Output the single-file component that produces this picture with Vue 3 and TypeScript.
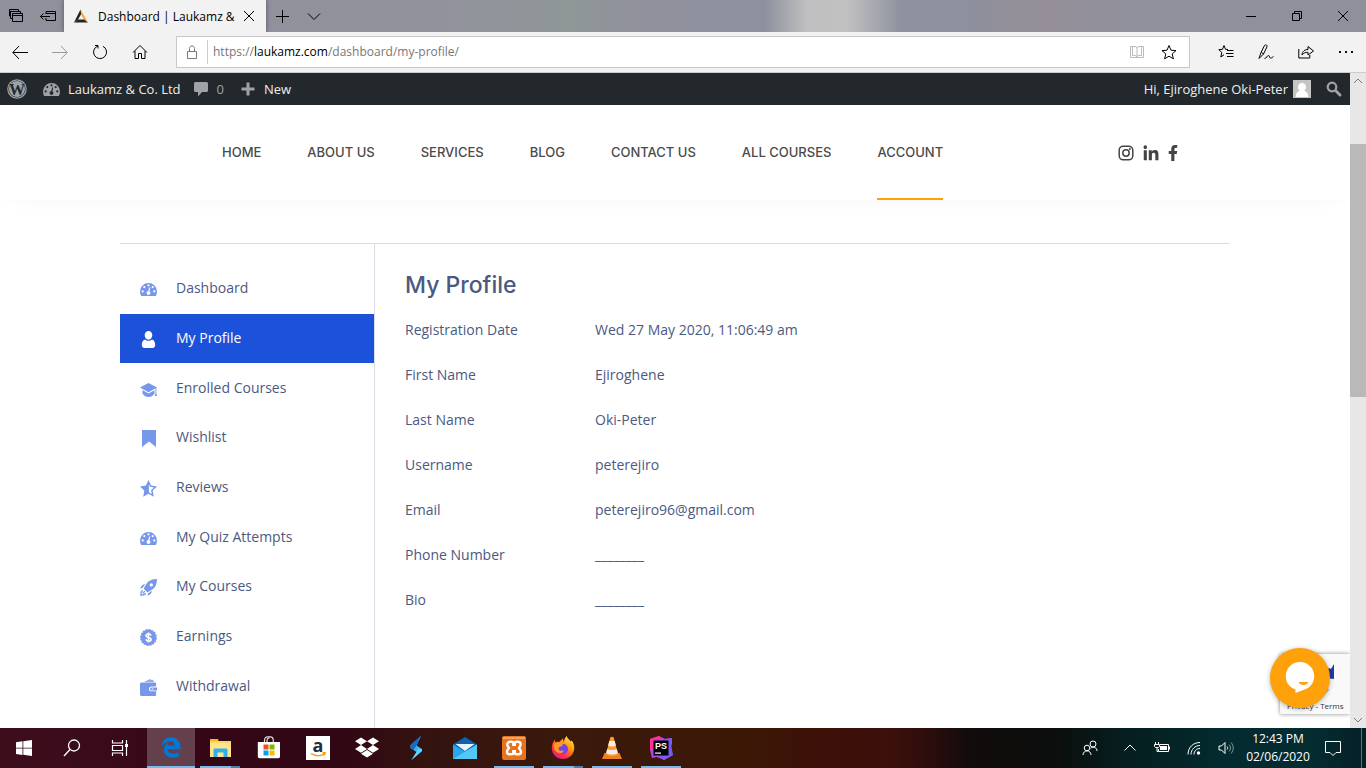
<script setup lang="ts">
interface MenuItem {
  label: string
  icon: string
  active?: boolean
}

interface TaskItem {
  label: string
  icon: string
  state?: 'focused' | 'open' | 'stacked'
}

const gauge =
  '<path fill-rule="evenodd" d="M8.500 2A8.500 8.500 0 0 0 0 10.500c0 1.700.4 3.200 1.200 4.500h14.600c.8-1.300 1.200-2.800 1.200-4.500A8.500 8.500 0 0 0 8.500 2zM8.500 3.200a1.100 1.100 0 1 1 0 2.200 1.100 1.100 0 0 1 0-2.200zM4.300 5a1.100 1.100 0 1 1 0 2.200 1.100 1.100 0 0 1 0-2.200zM2.700 9.300a1.100 1.100 0 1 1 0 2.200 1.100 1.100 0 0 1 0-2.200zM14.300 9.300a1.100 1.100 0 1 1 0 2.200 1.100 1.100 0 0 1 0-2.200zM12.700 5a1.100 1.100 0 1 1 0 2.200 1.100 1.100 0 0 1 0-2.200zM9.300 6.300l.9.3-.7 4a1.800 1.800 0 1 1-1.300-.3z"/>'

const menu: MenuItem[] = [
  { label: 'Dashboard', icon: gauge },
  {
    label: 'My Profile',
    active: true,
    icon: '<path d="M8.500 0c2.300 0 3.800 1.700 3.800 4S10.800 8.700 8.500 8.700 4.700 6.300 4.700 4 6.200 0 8.500 0zM5 8.500c1 .9 2.200 1.300 3.500 1.300S11 9.400 12 8.500c2.200.8 3.200 2.600 3.200 5.200 0 2-1 3.300-2.800 3.300H4.600c-1.800 0-2.800-1.300-2.800-3.300 0-2.600 1-4.400 3.200-5.200z"/>',
  },
  {
    label: 'Enrolled Courses',
    icon: '<path d="M8.500 2L0 6.500l2.200 1.300L8.500 11.200l6.300-3.400.7-.4v4.800l-.7 2.800H17l-.7-2.800V7L17 6.500zM2.500 9v3.500C4 15 6 16 8.500 16s4.500-1 6-3.500V9.200l-6 3.300z"/>',
  },
  { label: 'Wishlist', icon: '<path d="M2 0h14v17l-7-5.500L2 17z"/>' },
  {
    label: 'Reviews',
    icon: '<path fill-rule="evenodd" d="M8.500 0l2.600 5.600 5.900.8-4.300 4.200 1.100 6.100-5.300-3-5.300 3 1.100-6.100L0 6.400l5.900-.8zM8.900 4v8.300l2.900 1.700-.7-3.900 2.900-2.700-4-.6z"/>',
  },
  { label: 'My Quiz Attempts', icon: gauge },
  {
    label: 'My Courses',
    icon: '<path fill-rule="evenodd" d="M17 0c-5 0-8.300 1.500-10.500 4.700L3.600 9.600l3.800 3.800 4.900-2.900C15.500 8.300 17 5 17 0zM11.300 4.200a1.700 1.700 0 1 1 0 3.400 1.700 1.700 0 0 1 0-3.400zM5.200 4.800L2 6.200.2 9.500l2.600-.7zM12.200 11.800l-1.400 3.200-3.300 1.800.7-2.600z"/><path fill="none" stroke="currentColor" stroke-width="1.300" d="M2.500 11.200C1 12.500.7 14 .8 16.200c2.200.1 3.700-.2 5-1.700M2.700 14.300l2.100-2.100"/>',
  },
  {
    label: 'Earnings',
    icon: '<circle cx="8.500" cy="8.500" r="7.700"/><circle cx="8.500" cy="8.500" r="7.700" fill="none" stroke="currentColor" stroke-width="1.500" stroke-dasharray="2 1"/><path fill="none" stroke="#fff" stroke-width="1.600" d="M8.500 3.500v10M11.100 6.500C10.700 5.300 9.700 5 8.500 5 7.100 5 6 5.600 6 6.700c0 2.500 5.100 1 5.100 3.700 0 1.100-1.100 1.700-2.500 1.700S6.200 11.500 5.800 10.300"/>',
  },
  {
    label: 'Withdrawal',
    icon: '<path fill-rule="evenodd" d="M1.500 3.500h13.700c.6 0 .9.400.9.900v3.100h-4.500c-1.700 0-2.600 1-2.600 2.400s.9 2.400 2.600 2.400h4.500v3.600c0 .6-.3 1.100-.9 1.100H1.500C.6 17 0 16.500 0 15.600V5c0-.9.600-1.500 1.500-1.500z"/><path d="M11.600 8.400H17v3.100h-5.400a1.500 1.500 0 0 1 0-3.100z"/><path stroke="#fff" d="M11.800 10h1.500"/><path d="M4 3l6-3 1.300 1L13 .8l1 2.200z" opacity=".8"/>',
  },
]

const profile: [string, string][] = [
  ['Registration Date', 'Wed 27 May 2020, 11:06:49 am'],
  ['First Name', 'Ejiroghene'],
  ['Last Name', 'Oki-Peter'],
  ['Username', 'peterejiro'],
  ['Email', 'peterejiro96@gmail.com'],
  ['Phone Number', '________'],
  ['Bio', '________'],
]

const siteLinks = ['Home', 'About us', 'Services', 'Blog', 'Contact us', 'All courses', 'Account']

const systemTasks: TaskItem[] = [
  { label: 'Start', icon: '<path fill="#fff" d="M4 6.300l6.500-1v6.400H4zM11.300 5.200L20 4v7.700h-8.700zM4 12.500h6.500v6.400L4 18zM11.300 12.500H20V20l-8.700-1.200z"/>' },
  { label: 'Search', icon: '<g fill="none" stroke="#fff" stroke-width="1.300"><circle cx="14" cy="9.500" r="5.500"/><path d="M10 13.500L4 20"/></g>' },
  { label: 'Task View', icon: '<path fill="none" stroke="#fff" stroke-width="1.200" d="M4.500 4v3h10V4M4.500 20v-3h10v3M4.500 9.500h10v5h-10zM18.500 4v16"/><path fill="#fff" d="M17 8h3v3h-3z"/>' },
]

const appTasks: TaskItem[] = [
  {
    label: 'Microsoft Edge',
    state: 'focused',
    icon: '<path fill="#0078d7" transform="translate(1.500 1) scale(.041)" d="M486.286 243.671c0-44.032-7.754-84.465-28.801-122.405C416.498 47.879 343.912 8.001 258.893 8.001 118.962 7.724 40.617 113.214 26.056 227.679c42.429-61.312 117.073-121.376 220.375-124.966 0 0 109.666 0 99.419 104.957H169.997c6.369-37.386 18.554-58.986 34.339-78.926-75.048 34.900-121.850 96.096-120.742 188.315.83 71.448 50.124 144.836 120.743 171.976 83.357 31.847 192.776 7.200 240.132-21.324V363.307c-80.864 56.494-270.871 60.925-272.255-67.572h314.073v-52.063z"/>',
  },
  {
    label: 'File Explorer',
    state: 'stacked',
    icon: '<path fill="#f2b91d" d="M2 3h8l1 3H2z"/><path fill="#ffe391" d="M2 5h21v16H2z"/><path fill="#fdd663" d="M2 5h21v2H2z"/><path fill="#2fb1e8" d="M5.500 21v-7c0-.8.7-1.500 1.500-1.500h11c.8 0 1.500.7 1.500 1.500v7h-4v-4.500h-6V21z"/>',
  },
  {
    label: 'Microsoft Store',
    icon: '<path fill="none" stroke="#ddd" stroke-width="1.200" d="M7.500 7V4.500C7.500 2 9 .8 10.500.8h2.800c1.500 0 3 1.200 3 3.700V7M10 7V5c0-2 1-3 2.500-3"/><path fill="#fff" d="M.8 6H23v14.500c0 1-.7 1.700-1.700 1.700H2.500c-1 0-1.700-.7-1.700-1.700z"/><path fill="#f04e1f" d="M6.500 8.500h5v5h-5z"/><path fill="#7db900" d="M12.500 8.500h5v5h-5z"/><path fill="#00a3ee" d="M6.500 14.500h5v5h-5z"/><path fill="#ffb800" d="M12.500 14.500h5v5h-5z"/>',
  },
  {
    label: 'Amazon',
    icon: '<path fill="#fff" d="M0 0h24v24H0z"/><text x="12" y="15.500" text-anchor="middle" font-family="Open Sans, sans-serif" font-size="18" font-weight="700" fill="#232f3e">a</text><path fill="none" stroke="#f90" stroke-width="1.500" d="M5 17.500c4 3 9.500 3 13.500.3M16.500 16.800h2.500l-.7 2.400"/>',
  },
  {
    label: 'Dropbox',
    icon: '<path fill="#fff" d="M6 1.500l6 3.800L6 9.100 0 5.300zM18 1.500l6 3.800-6 3.800-6-3.800zM6 9.100l6 3.800-6 3.800-6-3.800zM18 9.100l6 3.800-6 3.800-6-3.800zM12 14l6 3.800-6 3.800-6-3.800z"/>',
  },
  {
    label: 'Stream',
    icon: '<path fill="#35b8f5" d="M17 0l-4.500 9.500L18 13v2L7.500 24l5-8-6-4V9z"/><path fill="#1769c4" d="M17 0L6.500 9v3l3 2L12.500 9.500z"/><path fill="#5ad6fb" d="M18 13v2L7.500 24l5-8 1.500-3z"/>',
  },
  {
    label: 'Mail',
    icon: '<path fill="#0a63b5" d="M0 8.500L12 1l12 7.500V22H0z"/><path fill="#e9f3fa" d="M2.500 8h19L12 15z"/><path fill="#2aa6ea" d="M0 8.500l12 7 12-7V23H0z"/><path fill="#53c8f8" d="M24 8.500L0 23h24z"/>',
  },
  {
    label: 'XAMPP',
    state: 'open',
    icon: '<rect width="24" height="24" rx="2" fill="#e8731d"/><path fill="#f4a468" d="M1 1h22v2H1z"/><path fill="none" stroke="#fff" stroke-width="2.400" d="M8 5.800h1.700c1.100 0 1.600.7 1.600 1.600v1.400h1.500V7.400c0-1 .6-1.600 1.600-1.600H16c1.500 0 2.600 1 2.600 2.500 0 1.700-.8 2.300-1.600 3.700.8 1.200 2 2.200 2 3.700s-1 2.600-2.500 2.600h-1.900c-1.200 0-1.800-.7-1.800-1.800v-1.300h-1.500v1.300c0 1.200-.7 1.800-1.800 1.800H7.600C6 18.300 5 17.200 5 15.700c0-1.600 1-2.500 2-3.700-.9-1.200-1.700-2.100-1.700-3.600C5.300 6.900 6.400 5.800 8 5.800z"/>',
  },
  {
    label: 'Firefox',
    state: 'stacked',
    icon: '<defs><linearGradient id="fox" x1=".9" y1="0" x2=".2" y2="1"><stop offset="0" stop-color="#fff44f"/><stop offset=".4" stop-color="#ff980e"/><stop offset=".7" stop-color="#ff3647"/><stop offset="1" stop-color="#e31587"/></linearGradient></defs><path fill="url(#fox)" d="M15.500 0c1 2.500 3 3.500 4.300 5.500l1-1c1.900 2.800 2.700 5.400 2.400 8.600C22.600 19 18 23 12 23 5.500 23 .8 18.300.8 12c0-3.500 1.200-6.300 3-8.300l.7 2.800C6 5.500 7 5.500 8.200 5.900L12 2.500l.6 3.700c.7-2 1.200-4.200 2.900-6.200z"/><circle cx="12" cy="13" r="5" fill="#7542e5"/><path fill="#ff9a1f" d="M3 8c3-2 6-2 9 1-1 2-4 1-4.500 3.500S11 15 13 14.500c-1 3-5 4-8 1S3 10 3 8z"/>',
  },
  {
    label: 'VLC',
    state: 'open',
    icon: '<path fill="#f08019" d="M4.500 17h15l2.500 6H2z"/><path fill="#ff9a2b" d="M10.300 1.500c.5-1 2.900-1 3.400 0L18 18c-2 3-10 3-12 0z"/><path fill="#eee" d="M9.300 5h5.400l1.200 4.500c-2 1.200-5.800 1.200-7.800 0zM7.200 13c2.500 1.300 7.100 1.300 9.600 0l1.100 4c-2.700 2-9.100 2-11.800 0z"/>',
  },
  {
    label: 'PhpStorm',
    state: 'open',
    icon: '<path fill="#b345f1" d="M1 3l9-3 6 3 7-1v6l-2 4 3 7-9 5-7-3-5 1L1 14z"/><path fill="#765af8" d="M15 3l8-1-1 6 2 11-9 5-5-4z"/><path fill="#ff318c" d="M1 3l9-3 3 4H5v10l-4 0z"/><path fill="#000" d="M4.500 4.500h15v15h-15z"/><text x="12" y="12.500" text-anchor="middle" font-family="Liberation Sans, sans-serif" font-size="9" font-weight="700" fill="#fff">PS</text><path fill="#fff" d="M6 16.500h6v1.200H6z"/>',
  },
]
</script>

<template>
  <div class="desktop">
    <header class="titlebar">
      <button class="set-aside" aria-label="Tabs you've set aside">
        <svg class="i16" viewBox="0 0 16 16"><path class="line" d="M4.500 5.500h10v8h-10zM4.500 7.500h10M4 10.500H2.500V3M2.500 5.500V3.500h10v2M2 8H1.500V1.500h9v2" /></svg>
      </button>
      <button class="set-aside" aria-label="Set these tabs aside">
        <svg class="i16" viewBox="0 0 16 16"><path class="line" d="M6 6V3.500h9.500v9H6V10M6 5.500h9.500M10 8.500H.5M3.500 5.500l-3 3 3 3" /></svg>
      </button>
      <div class="tab">
        <svg class="i16" viewBox="0 0 16 16"><path fill="#222" d="M7.500 1.500l1 4-3.500 6L1 14.500z" /><path fill="#f5a52a" d="M7.500 1.500l7.500 13-4-3-3-5.500z" /><path fill="#2c241c" d="M1 14.500l4-3h6l4 3z" /></svg>
        <span class="tab-title">Dashboard | Laukamz &amp;</span>
        <button class="tab-close" aria-label="Close tab">
          <svg class="i16" viewBox="0 0 16 16"><path class="line" d="M3 3l10 10M13 3L3 13" /></svg>
        </button>
      </div>
      <button class="tab-tool" aria-label="New tab">
        <svg class="i16" viewBox="0 0 16 16"><path class="line" d="M8.500 2v13M2 8.500h13" /></svg>
      </button>
      <button class="tab-tool" aria-label="Show tab previews">
        <svg class="i16" viewBox="0 0 16 16"><path class="line" d="M2 5.500l6 6 6-6" /></svg>
      </button>
      <div class="window-buttons">
        <button aria-label="Minimize"><svg class="i16" viewBox="0 0 16 16"><path class="line" d="M3 8.500h10" /></svg></button>
        <button aria-label="Restore"><svg class="i16" viewBox="0 0 16 16"><path class="line" d="M3.500 5.500h7v7h-7zM5.500 5.500v-2h7v7h-2" /></svg></button>
        <button aria-label="Close"><svg class="i16" viewBox="0 0 16 16"><path class="line" d="M3 3l10 10M13 3L3 13" /></svg></button>
      </div>
    </header>

    <div class="toolbar">
      <button class="tool" aria-label="Back"><svg class="i16" viewBox="0 0 16 16"><path class="line" d="M16 8.500H1M7 2L.8 8.500 7 15" /></svg></button>
      <button class="tool faded" aria-label="Forward"><svg class="i16" viewBox="0 0 16 16"><path class="line" d="M0 8.500h15M9 2l6.200 6.500L9 15" /></svg></button>
      <button class="tool" aria-label="Refresh"><svg class="i16" viewBox="0 0 16 16"><path class="line" d="M3 1.500h3v3M5.800 2A6.500 6.500 0 1 0 11 2.300" /></svg></button>
      <button class="tool" aria-label="Home"><svg class="i16" viewBox="0 0 16 16"><path class="line" d="M1 8.500l7-7 7 7M3 7v7.500h3.500v-5h3v5H13V7" /></svg></button>
      <div class="address">
        <svg class="i16 lock" viewBox="0 0 16 16"><path class="line" d="M3.500 7.500h9v7h-9zM5.500 7V4.500c0-3.500 5-3.500 5 0V7" /></svg>
        <span class="divider"></span>
        <a class="url" href="https://laukamz.com/dashboard/my-profile/">https://<b>laukamz.com</b>/dashboard/my-profile/</a>
        <button class="in-field faint" aria-label="Reading view"><svg class="i16" viewBox="0 0 16 16"><path class="line" d="M1.500 2.500h4.500l2 1 2-1h4.500v11H1.500zM8 3.500v10M3.500 2v9.500h3l1.500 1 1.500-1h3V2" /></svg></button>
        <button class="in-field" aria-label="Add to favorites"><svg class="i16" viewBox="0 0 16 16"><path class="line" d="M8 1.500l2 4.700 5 .4-3.800 3.300 1.200 4.900L8 12.200l-4.400 2.600 1.200-4.900L1 6.600l5-.4z" /></svg></button>
      </div>
      <button class="tool" aria-label="Hub"><svg class="i16" viewBox="0 0 16 16"><path class="line" d="M10 5.500L7.500 5.300 6 1.500 4.500 5.300.8 5.700l3 2.800-1 4.500L6 10.800M9 6.500h6.500M8 9.500h7.500M9 12.500h6.500" /></svg></button>
      <button class="tool" aria-label="Add notes"><svg class="i16" viewBox="0 0 16 16"><path class="line" d="M1 14.500L3 8.500 6.500 1.500c1-1.300 3-.5 2.500 1.300L5.500 10 1 14.500zM3.500 8.500L6 10M6.500 14.500c2 0 2.500-3 4-3s.5 2.500 2 2.500 1.500-.5 3-1.500" /></svg></button>
      <button class="tool" aria-label="Share"><svg class="i16" viewBox="0 0 16 16"><path class="line" d="M.8 5v9h11v-3M4 11c.3-4 3-5.500 6-5.500V2.500L15.500 7 10 11V8.300C7.500 8.300 5.500 9 4 11z" /></svg></button>
      <button class="tool" aria-label="Settings and more"><svg class="i16" viewBox="0 0 16 16"><path fill="#111" d="M1 7h2v2H1zM7 7h2v2H7zM13 7h2v2h-2z" /></svg></button>
    </div>

    <div class="viewport">
      <div class="page">
        <nav class="adminbar" aria-label="Toolbar">
          <a href="#" class="wp" aria-label="About WordPress">
            <svg class="i20" viewBox="0 0 20 20"><circle cx="10" cy="10" r="9.200" fill="none" stroke="#9ea3a8" stroke-width="1.200" /><circle cx="10" cy="10" r="8" fill="#9ea3a8" /><text x="10" y="15.500" text-anchor="middle" font-family="Liberation Serif, serif" font-size="16" font-weight="700" fill="#23282d">W</text></svg>
          </a>
          <a href="#" class="site-name">
            <svg class="i17 grey" viewBox="0 0 17 17" v-html="gauge"></svg>Laukamz &amp; Co. Ltd
          </a>
          <a href="#" class="comments">
            <svg class="i16 grey" viewBox="0 0 16 16"><path d="M2.500 1h11c.8 0 1.500.7 1.500 1.500v7c0 .8-.7 1.500-1.500 1.500H9l-4 4.500V11H2.500C1.700 11 1 10.300 1 9.500v-7C1 1.700 1.700 1 2.500 1z" /></svg>0
          </a>
          <a href="#" class="new">
            <svg class="i16 grey" viewBox="0 0 16 16"><path d="M6.500 1.500h3v5h5v3h-5v5h-3v-5h-5v-3h5z" /></svg>New
          </a>
          <a href="#" class="account">
            Hi, Ejiroghene Oki-Peter
            <svg class="i18" viewBox="0 0 18 18"><path fill="#c5c5c5" d="M0 0h18v18H0z" /><path fill="#fff" d="M9 3c2.500 0 4 1.800 4 4 0 1.700-.8 3-1.800 3.800 2.500.6 4 2.700 4 6.200H2.800c0-3.500 1.500-5.600 4-6.200C5.800 10 5 8.700 5 7c0-2.200 1.500-4 4-4z" /></svg>
          </a>
          <button class="admin-search" aria-label="Search">
            <svg class="i16" viewBox="0 0 16 16"><g fill="none" stroke="#9ea3a8"><circle cx="6" cy="6" r="4.300" stroke-width="2.200" /><path stroke-width="3" stroke-linecap="round" d="M10 10l4 4" /></g></svg>
          </button>
        </nav>

        <header class="site-header">
          <div class="site-inner">
            <nav class="site-nav" aria-label="Main">
              <a v-for="link in siteLinks" :key="link" href="#" :class="{ current: link === 'Account' }">{{ link }}</a>
            </nav>
            <div class="social">
              <a href="#" aria-label="Instagram"><svg class="i16" viewBox="0 0 16 16"><g fill="none" stroke="#444" stroke-width="1.500"><rect x="1.200" y="1.200" width="13.600" height="13.600" rx="4" /><circle cx="8" cy="8" r="3.200" /></g><circle cx="11.900" cy="4.100" r="1" fill="#444" /></svg></a>
              <a href="#" aria-label="LinkedIn"><svg class="i16" viewBox="-5 -10 460 480"><path fill="#444" d="M100.280 448H7.400V148.900h92.880zM53.790 108.100C24.090 108.100 0 83.500 0 53.800a53.790 53.790 0 0 1 107.580 0c0 29.700-24.100 54.300-53.790 54.300zM447.900 448h-92.680V302.400c0-34.700-.7-79.200-48.290-79.200-48.290 0-55.690 37.700-55.690 76.700V448h-92.780V148.900h89.080v40.800h1.300c12.400-23.500 42.690-48.300 87.880-48.300 94 0 111.280 61.900 111.280 142.300V448z" /></svg></a>
              <a href="#" aria-label="Facebook"><svg class="fb" viewBox="0 0 320 512"><path fill="#444" d="M279.140 288l14.220-92.660h-88.910v-60.130c0-25.350 12.420-50.060 52.240-50.060h40.420V6.260S260.430 0 225.360 0c-73.220 0-121.080 44.380-121.080 124.720v70.620H22.890V288h81.390v224h100.170V288z" /></svg></a>
            </div>
          </div>
        </header>

        <main class="dashboard">
          <nav class="side" aria-label="Dashboard">
            <a v-for="item in menu" :key="item.label" href="#" :class="{ active: item.active }">
              <svg class="i17" viewBox="0 0 17 17" v-html="item.icon"></svg>{{ item.label }}
            </a>
          </nav>
          <section class="profile">
            <h1>My Profile</h1>
            <table>
              <tbody>
                <tr v-for="[name, value] in profile" :key="name">
                  <th scope="row">{{ name }}</th>
                  <td>{{ value }}</td>
                </tr>
              </tbody>
            </table>
          </section>
        </main>

        <aside class="captcha">
          <svg viewBox="0 0 40 36" class="captcha-mark"><path fill="#1c3aa9" d="M40 0v15l-9-1V7l4-3 2 1z" /><path fill="#ababab" d="M26 26l6-5 3 5-6 6z" /></svg>
          <p><a href="#">Privacy</a> - <a href="#">Terms</a></p>
        </aside>
        <button class="chat" aria-label="Open chat">
          <svg viewBox="0 0 60 60"><path fill="#fff" d="M30 14c8.200 0 14.200 6.300 14.200 14.200 0 7-4.800 12-10.200 13.600L25.500 45v-3.600C19.500 39.500 15.800 34.500 15.800 28.200 15.800 20.300 21.800 14 30 14z" /><path fill="#ffa10a" d="M28.500 34h10c-1 2-2.700 3-5 3s-4-1-5-3z" /></svg>
        </button>
      </div>
      <div class="scrollbar" aria-hidden="true">
        <svg class="i16" viewBox="0 0 16 16"><path class="line" d="M4 10l4-4 4 4" /></svg>
        <span class="thumb"></span>
        <svg class="i16" viewBox="0 0 16 16"><path class="line" d="M4 6l4 4 4-4" /></svg>
      </div>
    </div>

    <footer class="taskbar">
      <div class="system">
        <button v-for="task in systemTasks" :key="task.label" :aria-label="task.label"><svg class="i24" viewBox="0 0 24 24" v-html="task.icon"></svg></button>
      </div>
      <div class="apps">
        <button v-for="task in appTasks" :key="task.label" :aria-label="task.label" :class="task.state"><svg class="i24" viewBox="0 0 24 24" v-html="task.icon"></svg></button>
      </div>
      <div class="tray">
        <button class="people" aria-label="People"><svg class="i16" viewBox="0 0 16 16"><g class="white"><circle cx="11" cy="4" r="3" /><circle cx="5" cy="8" r="2.800" /><path d="M1 15c0-5.500 8-5.500 8 0M8.500 8.300c3-2.300 6.500-.8 6.500 2.700" /></g></svg></button>
        <button aria-label="Show hidden icons"><svg class="i16" viewBox="0 0 16 16"><path class="white" d="M2.500 10.500L8 5l5.500 5.500" /></svg></button>
        <button aria-label="Battery"><svg class="i16" viewBox="0 0 16 16"><path class="white" d="M6 4.500h8.500v7H4.500V9M15.500 6.500v3M1.500 2v2M4.500 2v2M.5 4.500h5v2c0 1.500-5 1.500-5 0zM3 8v3.500h1.500" /><path fill="#fff" d="M6 6h7v4H6z" /></svg></button>
        <button aria-label="Network"><svg class="i16" viewBox="0 0 16 16"><path class="white" d="M2 14.500C2 7.500 7 2.500 14 2.500M5 14.500c0-5 4-9 9-9M8 14.500c0-3.500 2.500-6 6-6" /><circle cx="12.500" cy="13" r="1.700" fill="#fff" /></svg></button>
        <button aria-label="Volume"><svg class="i16" viewBox="0 0 16 16"><path class="white" d="M1 6h2.500L7 2.500v11L3.500 10H1zM9 6.500c1 1 1 2 0 3" /><path class="white" opacity=".5" d="M11 4.500c2 2.200 2 4.800 0 7M13 2.500c3 3.500 3 7.500 0 11" /></svg></button>
        <time class="clock" datetime="2020-06-02T12:43">12:43 PM<br />02/06/2020</time>
        <button class="notices" aria-label="Notifications"><svg class="i18" viewBox="0 0 18 18"><path class="white" d="M1.500 2.500h15v11H12l-3 3-3-3H1.500z" /></svg></button>
        <span class="peek"></span>
      </div>
    </footer>
  </div>
</template>

<style>
body {
  margin: 0;
  overflow: hidden;
}
</style>

<style scoped>
.desktop {
  height: 100vh;
  display: flex;
  flex-direction: column;
  font-family: 'Open Sans', sans-serif;
  background: #fff;
}

button {
  padding: 0;
  border: 0;
  background: none;
  display: flex;
  align-items: center;
  justify-content: center;
  font: inherit;
}

a {
  color: inherit;
  text-decoration: none;
}

svg {
  display: block;
  flex: none;
  overflow: visible;
}

.i16 {
  width: 16px;
  height: 16px;
}

.i17 {
  width: 17px;
  height: 17px;
}

.i18 {
  width: 18px;
  height: 18px;
}

.i20 {
  width: 20px;
  height: 20px;
}

.i24 {
  width: 24px;
  height: 24px;
}

.line {
  fill: none;
  stroke: currentColor;
}

.white {
  fill: none;
  stroke: #fff;
}

.titlebar {
  flex: none;
  height: 32px;
  display: flex;
  background: linear-gradient(90deg, #8f909b 0, #92929d 32%, #8f9797 42%, #91919d 47%, #8d909d 56%, #bfbfc1 59%, #c1c1c1 62%, #8e919e 66%, #8d909d 71%, #958f98 76%, #90909c 82%, #90909c 100%);
}

.set-aside {
  width: 32px;
}

.tab {
  width: 202px;
  box-sizing: border-box;
  padding: 0 9px;
  display: flex;
  align-items: center;
  background: #f2f2f2;
  box-shadow: 0 0 5px rgba(0, 0, 0, 0.4);
  clip-path: inset(0 -6px);
  font-size: 12px;
}

.tab-title {
  flex: 1;
  margin-left: 9px;
  white-space: nowrap;
}

.tab-tool {
  width: 32px;
}

.window-buttons {
  margin-left: auto;
  display: flex;
}

.window-buttons button {
  width: 46px;
}

.toolbar {
  flex: none;
  height: 41px;
  box-sizing: border-box;
  padding-bottom: 1px;
  border-bottom: 1px solid #ccc;
  display: flex;
  align-items: center;
  background: #f2f2f2;
}

.tool {
  width: 40px;
  height: 32px;
}

.faded {
  color: #999;
}

.faint {
  color: #bbb;
}

.address {
  flex: 1;
  height: 32px;
  box-sizing: border-box;
  margin: 0 16px;
  padding: 0 4px 0 7px;
  border: 1px solid #c8c8c8;
  display: flex;
  align-items: center;
  background: #fff;
}

.lock {
  color: #777;
}

.divider {
  width: 1px;
  height: 24px;
  margin: 0 5px 0 7px;
  background: #ccc;
}

.url {
  flex: 1;
  font-size: 12px;
  color: #777;
}

.url b {
  font-weight: 400;
  color: #000;
}

.in-field {
  width: 32px;
  height: 30px;
}

.viewport {
  flex: 1;
  min-height: 0;
  display: flex;
}

.page {
  flex: 1;
  min-width: 0;
  position: relative;
  overflow: hidden;
  display: flex;
  flex-direction: column;
}

.adminbar {
  flex: none;
  height: 32px;
  padding: 0 8px 0 7px;
  display: flex;
  align-items: center;
  background: #23282d;
  color: #eee;
  font-size: 13px;
}

.adminbar a {
  display: flex;
  align-items: center;
  gap: 8px;
}

.grey {
  fill: #9ea3a8;
}

.site-name {
  margin-left: 16px;
}

.comments {
  margin-left: 12px;
  color: #9ea3a8;
}

.new {
  margin-left: 16px;
}

.adminbar .account {
  margin-left: auto;
  gap: 5px;
}

.admin-search {
  margin-left: 15px;
}

.site-header {
  flex: none;
  height: 95px;
  background: #fff;
  box-shadow: 0 10px 16px -10px rgba(0, 0, 0, 0.04);
}

.site-inner {
  max-width: 1110px;
  height: 100%;
  box-sizing: border-box;
  margin: 0 auto;
  padding: 0 52px 0 102px;
  display: flex;
  align-items: center;
  justify-content: space-between;
}

.site-nav {
  height: 100%;
  display: flex;
  gap: 46px;
}

.site-nav a {
  box-sizing: border-box;
  border-bottom: 2px solid transparent;
  display: flex;
  align-items: center;
  font: 500 13px Inter, sans-serif;
  text-transform: uppercase;
  color: #4a4a4a;
}

.site-nav .current {
  border-bottom-color: #ffa10a;
}

.social {
  display: flex;
  gap: 9px;
}

.fb {
  width: 10px;
  height: 16px;
}

.dashboard {
  flex: 1;
  width: 100%;
  max-width: 1110px;
  margin: 43px auto 0;
  border-top: 1px solid #dcdce6;
  display: flex;
  color: #4b5981;
  font-size: 14px;
}

.side {
  flex: none;
  width: 254px;
  height: 447px;
  padding: 20px 0 17px;
  border-right: 1px solid #dcdce6;
  display: grid;
  grid-template-rows: repeat(9, 1fr);
}

.side a {
  padding-left: 20px;
  padding-bottom: 2px;
  display: flex;
  align-items: center;
  gap: 19px;
}

.side svg {
  margin-top: 4px;
  fill: #7797ea;
  color: #7797ea;
}

.side .active {
  background: #1c51d9;
  color: #fff;
}

.side .active svg {
  fill: #fff;
}

.profile {
  flex: 1;
  padding: 23px 30px 0;
}

h1 {
  margin: 0 0 4px;
  font: 500 23px/36px Inter, sans-serif;
}

table {
  width: 100%;
  border-collapse: collapse;
}

th,
td {
  height: 45px;
  padding: 0;
  font-weight: 400;
  text-align: left;
}

th {
  width: 190px;
}

.captcha {
  position: absolute;
  right: 0;
  bottom: 14px;
  width: 70px;
  height: 60px;
  background: #f9f9f9;
  border-radius: 2px 0 0 2px;
  box-shadow: 0 0 4px #888;
}

.captcha-mark {
  width: 40px;
  height: 36px;
  margin: 10px 0 0 14px;
}

.captcha p {
  margin: 0 0 0 7px;
  font-size: 8px;
  line-height: 12px;
  white-space: nowrap;
  color: #333;
}

.chat {
  position: absolute;
  right: 20px;
  bottom: 20px;
  width: 60px;
  height: 60px;
  border-radius: 50%;
  background: #ffa10a;
  box-shadow: 0 1px 5px rgba(0, 0, 0, 0.3);
}

.chat svg {
  width: 60px;
  height: 60px;
}

.scrollbar {
  flex: none;
  width: 16px;
  display: grid;
  grid-template-rows: 71px 253px 1fr;
  background: #e7e7e7;
  color: #777;
}

.thumb {
  background: #b9b9b9;
}

.scrollbar svg:last-child {
  align-self: end;
}

.taskbar {
  flex: none;
  height: 40px;
  display: flex;
  background: linear-gradient(90deg, #3e0e1d 0, #350716 15%, #300613 25%, #341310 31%, #3a1a0b 42%, #3c1706 55%, #3d1008 60%, #3c100b 65%, #2c0d0c 68%, #120c0c 71%, #0b0e0c 77%, #061d1e 82%, #032a2e 89%, #042d31 96%, #061f27 100%);
}

.system,
.apps,
.tray {
  display: flex;
}

.system button {
  width: 48px;
}

.apps {
  margin-left: 3px;
  gap: 1px;
}

.apps button {
  width: 48px;
  background: no-repeat 4px 38px / 40px 2px;
}

.apps .open {
  background-image: linear-gradient(#76b9ed, #76b9ed);
}

.apps .stacked {
  background-image: linear-gradient(90deg, #76b9ed 31px, #4d7fa8 31px);
}

.apps .focused {
  background: linear-gradient(#76b9ed, #76b9ed) no-repeat 0 38px / 48px 2px #63404c;
}

.tray {
  margin-left: auto;
  align-items: center;
  color: #fff;
}

.tray button {
  width: 32px;
  height: 40px;
}

.tray .people {
  width: 48px;
}

.clock {
  width: 72px;
  text-align: center;
  font-size: 12px;
  line-height: 18px;
}

.tray .notices {
  width: 38px;
}

.peek {
  width: 4px;
  height: 40px;
  margin-left: 9px;
  border-left: 1px solid #5d7578;
}
</style>
